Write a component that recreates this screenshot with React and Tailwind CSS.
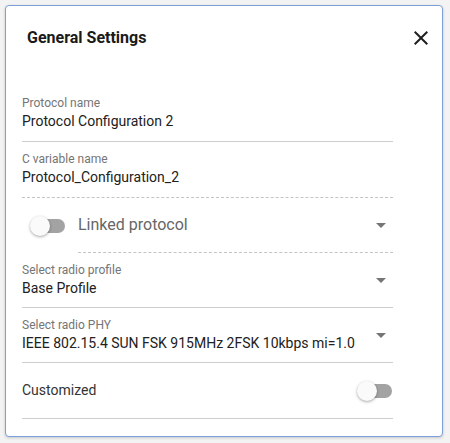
import React from 'react';

const font = { fontFamily: 'Roboto, "Liberation Sans", sans-serif' };

function CloseIcon() {
  return (
    <svg viewBox="0 0 24 24" className="w-6 h-6 fill-[#1f1f1f]">
      <path d="M19 6.41 17.59 5 12 10.59 6.41 5 5 6.41 10.59 12 5 17.59 6.41 19 12 13.41 17.59 19 19 17.59 13.41 12z" />
    </svg>
  );
}

function ArrowDrop() {
  return (
    <svg viewBox="0 0 24 24" className="w-6 h-6 fill-[#757575] shrink-0">
      <path d="M7 10l5 5 5-5z" />
    </svg>
  );
}

function Toggle() {
  return (
    <div className="relative w-[36px] h-[20px] flex items-center shrink-0">
      <div className="w-[34px] h-[14px] ml-[1px] rounded-full bg-[#a3a3a3]" />
      <div className="absolute left-0 top-0 w-[20px] h-[20px] rounded-full bg-[#fafafa] shadow-[0_1px_3px_rgba(0,0,0,0.35)]" />
    </div>
  );
}

function Field({ label, value, dashed, select, tall }) {
  return (
    <div
      className={`${tall ? 'h-[56px]' : 'h-[55px]'} border-b ${
        dashed ? 'border-dashed border-[#c4c4c4]' : 'border-[#cdcdcd]'
      }`}
    >
      <div className="flex items-center pt-[9px]">
        <div className="flex-1 min-w-0">
          <div className="text-[12px] leading-4 text-[#757575]">{label}</div>
          <div className="text-[14px] leading-[20px] text-[#212121] whitespace-nowrap">{value}</div>
        </div>
        {select && <ArrowDrop />}
      </div>
    </div>
  );
}

export default function App() {
  return (
    <div className="w-[450px] h-[443px] bg-[#f3f3f3] p-[5px]" style={font}>
      <div className="w-[438px] h-[432px] bg-white border border-[#7c9fd9] rounded-[4px] shadow-[0_1px_3px_rgba(0,0,0,0.18)] flex flex-col">
        {/* Header */}
        <div className="flex items-center justify-between pl-[21px] pr-[9px] h-[64px]">
          <h2 className="text-[16px] font-bold text-[#1a1a1a]">General Settings</h2>
          <button>
            <CloseIcon />
          </button>
        </div>

        {/* Fields */}
        <div className="ml-[16px] w-[371px] mt-[16px]">
          <Field label="Protocol name" value="Protocol Configuration 2" tall />
          <Field label="C variable name" value="Protocol_Configuration_2" dashed tall />

          <div className="flex items-stretch h-[55px]">
            <div className="w-[56px] flex items-center pl-[8px]">
              <Toggle />
            </div>
            <div className="flex-1 flex items-center border-b border-dashed border-[#c4c4c4]">
              <span className="flex-1 text-[16px] text-[#666666]">Linked protocol</span>
              <ArrowDrop />
            </div>
          </div>

          <Field label="Select radio profile" value="Base Profile" select />
          <Field
            label="Select radio PHY"
            value="IEEE 802.15.4 SUN FSK 915MHz 2FSK 10kbps mi=1.0"
            select
          />

          <div className="flex items-center justify-between h-[56px] border-b border-[#cdcdcd]">
            <span className="text-[14px] text-[#333333]">Customized</span>
            <Toggle />
          </div>
        </div>
      </div>
    </div>
  );
}
